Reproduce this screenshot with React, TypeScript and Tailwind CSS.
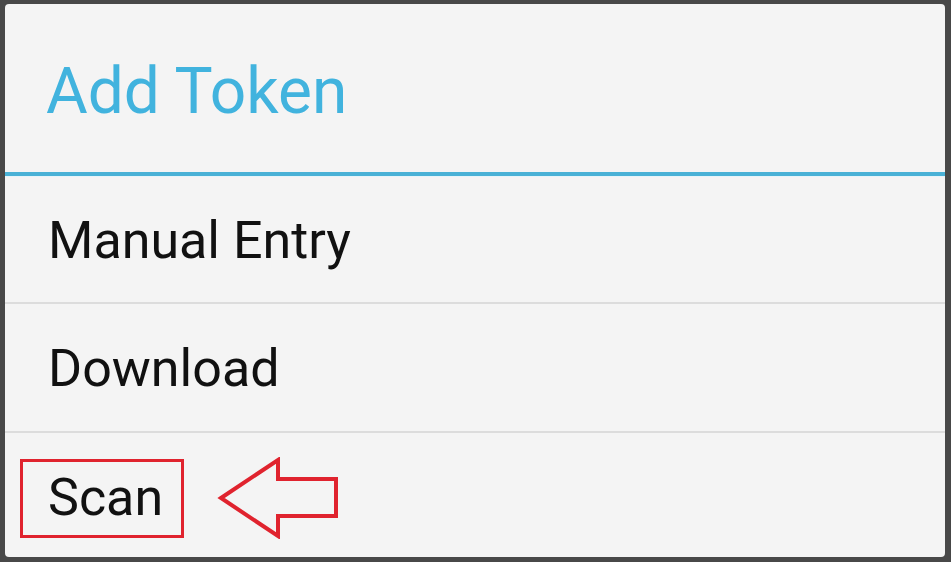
export default function App() {
  return (
    <div className="flex h-[562px] w-[951px] bg-[#484848] pb-[5px] pl-[5px] pr-[6px] pt-[4px] font-['Roboto',sans-serif]">
      <div className="flex flex-1 flex-col overflow-hidden rounded-[4px] bg-[#f4f4f4]">
        <div className="flex h-[168px] items-center pl-[41px] pt-[8px]">
          <h1 className="text-[64px] leading-none text-[#41b3de]">Add Token</h1>
        </div>
        <div className="h-[4px] bg-[#49b1d6]" />
        <div className="h-[1px] bg-[#e6f4f9]" />

        <div className="flex h-[125px] items-center pl-[43px] pt-[2px]">
          <span className="text-[52px] leading-none text-[#111]">Manual Entry</span>
        </div>
        <div className="h-[2px] bg-[#dcdcdc]" />

        <div className="flex h-[127px] items-center pl-[43px] pt-[2px]">
          <span className="text-[52px] leading-none text-[#111]">Download</span>
        </div>
        <div className="h-[2px] bg-[#dcdcdc]" />

        <div className="flex flex-1 items-center pl-[15px] pt-[6px]">
          <div className="flex h-[79px] w-[164px] items-center border-[3px] border-[#e0232e] pl-[25px]">
            <span className="text-[52px] leading-none text-[#111]">Scan</span>
          </div>
          <svg width="122" height="82" viewBox="0 0 122 82" className="ml-[33px]">
            <polygon
              points="4,41 61,3 61,22 119,22 119,59 61,59 61,79"
              fill="none"
              stroke="#e0232e"
              strokeWidth="4"
              strokeLinejoin="miter"
            />
          </svg>
        </div>
      </div>
    </div>
  );
}
